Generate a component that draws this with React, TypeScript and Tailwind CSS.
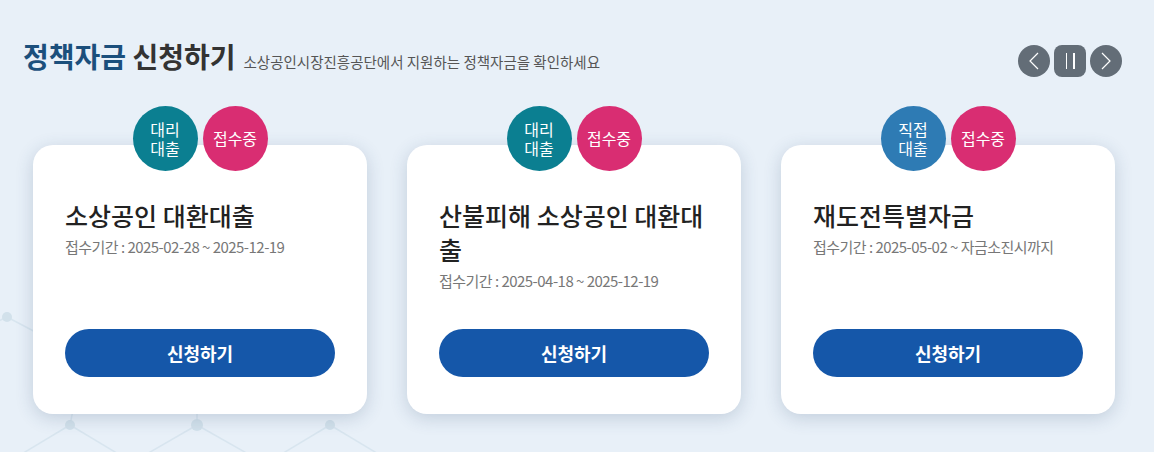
type Loan = {
  kind: [string, string]
  kindColor: string
  title: string
  period: string
}

const loans: Loan[] = [
  { kind: ['대리', '대출'], kindColor: 'bg-[#0b7f91]', title: '소상공인 대환대출', period: '접수기간 : 2025-02-28 ~ 2025-12-19' },
  { kind: ['대리', '대출'], kindColor: 'bg-[#0b7f91]', title: '산불피해 소상공인 대환대출', period: '접수기간 : 2025-04-18 ~ 2025-12-19' },
  { kind: ['직접', '대출'], kindColor: 'bg-[#2e7bb4]', title: '재도전특별자금', period: '접수기간 : 2025-05-02 ~ 자금소진시까지' },
]

const badge = 'flex h-[65px] w-[65px] items-center justify-center rounded-full text-center text-[16px] leading-[19px] text-white'

function LoanCard({ loan }: { loan: Loan }) {
  return (
    <div className="flex w-[334px] flex-col items-center">
      <div className="relative z-10 -mb-[26px] flex gap-[5px]">
        <div className={`${badge} ${loan.kindColor}`}>
          <p>
            {loan.kind[0]}
            <br />
            {loan.kind[1]}
          </p>
        </div>
        <div className={`${badge} bg-[#d92d72]`}>접수중</div>
      </div>
      <div className="flex h-[269px] w-full flex-col rounded-[20px] bg-white px-[32px] pb-[37px] pt-[53px] shadow-[0_4px_18px_rgba(40,70,110,0.2)]">
        <h3 className="break-all text-[25px] font-medium leading-[34px] text-[#222]">{loan.title}</h3>
        <p className="mt-[4px] text-[15px] leading-[22px] tracking-[-0.035em] text-[#777]">{loan.period}</p>
        <button className="mt-auto h-[48px] w-[270px] rounded-full bg-[#1557a9] text-[18px] font-bold text-white">
          신청하기
        </button>
      </div>
    </div>
  )
}

function Network() {
  const line = '#d8e5ef'
  const node = '#d2e1eb'
  return (
    <svg className="absolute inset-0" width="1154" height="452" viewBox="0 0 1154 452">
      <g stroke={line} strokeWidth="1.5" fill="none">
        <line x1="-20" y1="330" x2="7" y2="317" />
        <line x1="7" y1="317" x2="60" y2="345" />
        <line x1="70" y1="425" x2="20" y2="455" />
        <line x1="70" y1="425" x2="120" y2="455" />
        <line x1="75" y1="400" x2="70" y2="425" />
        <line x1="197" y1="425" x2="145" y2="455" />
        <line x1="197" y1="425" x2="250" y2="455" />
        <line x1="197" y1="405" x2="197" y2="425" />
        <line x1="330" y1="425" x2="280" y2="455" />
        <line x1="330" y1="425" x2="380" y2="455" />
      </g>
      <g fill={node}>
        <circle cx="7" cy="317" r="5" />
        <circle cx="70" cy="425" r="5" />
        <circle cx="197" cy="425" r="6" />
        <circle cx="330" cy="425" r="5" />
      </g>
    </svg>
  )
}

export default function App() {
  return (
    <div className="relative h-[452px] w-[1154px] overflow-hidden bg-[#e8f0f8] font-['Noto_Sans_CJK_KR',sans-serif]">
      <Network />
      <div className="relative">
        <div className="flex items-center justify-between pl-[23px] pr-[32px] pt-[45px]">
          <div className="-mt-[10px] flex items-baseline gap-[8px]">
            <h2 className="text-[28px] font-bold leading-[32px] text-[#333]">
              <span className="text-[#1b4f7c]">정책자금</span> 신청하기
            </h2>
            <p className="text-[14.5px] text-[#555]">소상공인시장진흥공단에서 지원하는 정책자금을 확인하세요</p>
          </div>
          <div className="flex gap-[4px]">
            <button className="flex h-[32px] w-[32px] items-center justify-center rounded-full bg-[#636d77]">
              <svg width="14" height="18" viewBox="0 0 14 18" fill="none" stroke="white" strokeWidth="1.2">
                <path d="M11 1 L3 9 L11 17" />
              </svg>
            </button>
            <button className="flex h-[32px] w-[32px] items-center justify-center gap-[6px] rounded-[8px] bg-[#636d77]">
              <span className="h-[16px] w-[1.5px] bg-white" />
              <span className="h-[16px] w-[1.5px] bg-white" />
            </button>
            <button className="flex h-[32px] w-[32px] items-center justify-center rounded-full bg-[#636d77]">
              <svg width="14" height="18" viewBox="0 0 14 18" fill="none" stroke="white" strokeWidth="1.2">
                <path d="M3 1 L11 9 L3 17" />
              </svg>
            </button>
          </div>
        </div>
        <div className="mt-[29px] flex gap-[40px] pl-[33px]">
          {loans.map((l) => (
            <LoanCard key={l.title} loan={l} />
          ))}
        </div>
      </div>
    </div>
  )
}
